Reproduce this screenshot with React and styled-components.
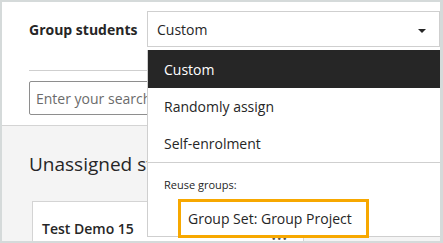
import styled, { createGlobalStyle } from "styled-components";

const Global = createGlobalStyle`
  html, body {
    margin: 0;
    padding: 0;
    background: #d5dada;
  }
  * {
    box-sizing: border-box;
  }
`;

const Frame = styled.div`
  position: relative;
  width: 443px;
  height: 243px;
  border: 2px solid #d5dada;
  border-right-width: 3px;
  overflow: hidden;
  font-family: "Open Sans", "Liberation Sans", sans-serif;
  color: #262626;
  background: #f4f4f4;
`;

const TopPanel = styled.div`
  height: 124px;
  background: #fff;
  border-bottom: 1px solid #d4d4d4;
  padding: 9px 0 0 26px;
`;

const FieldRow = styled.div`
  display: flex;
  align-items: center;
`;

const Label = styled.label`
  width: 119px;
  font-size: 14px;
  font-weight: 700;
  padding-left: 1px;
`;

const SelectWrap = styled.div`
  position: relative;
  z-index: 2;
`;

const SelectBox = styled.div`
  display: flex;
  align-items: center;
  justify-content: space-between;
  width: 293px;
  height: 36px;
  padding: 0 13px 0 9px;
  border: 1px solid #cfcfcf;
  background: #fff;
  font-size: 14px;
`;

const Caret = styled.span`
  width: 0;
  height: 0;
  margin-top: 3px;
  border-left: 4px solid transparent;
  border-right: 4px solid transparent;
  border-top: 4px solid #262626;
`;

const Menu = styled.ul`
  position: absolute;
  top: 39px;
  left: 0;
  width: 294px;
  height: 187px;
  margin: 0;
  padding: 0;
  list-style: none;
  background: #fff;
  border: 1px solid #cfcfcf;
  border-top: none;
`;

const Option = styled.li`
  display: flex;
  align-items: center;
  height: ${(p) => (p.$height ? p.$height : 37)}px;
  padding-left: 16px;
  font-size: 14px;
  background: ${(p) => (p.$selected ? "#262626" : "#fff")};
  color: ${(p) => (p.$selected ? "#fff" : "#262626")};
`;

const MenuDivider = styled.li`
  height: 1px;
  background: #cfcfcf;
`;

const GroupHeading = styled.li`
  padding: 14px 0 0 16px;
  font-size: 11px;
  color: #262626;
`;

const FocusedOption = styled.li`
  display: flex;
  align-items: center;
  width: 191px;
  height: 39px;
  margin: 7px 0 0 30px;
  padding-left: 7px;
  border: 3px solid #f7a800;
  font-size: 14px;
`;

const Rule = styled.hr`
  width: 300px;
  margin: 23px 0 0 1px;
  border: none;
  border-top: 1px solid #cfcfcf;
`;

const Search = styled.input`
  display: block;
  width: 300px;
  height: 34px;
  margin: 10px 0 0 1px;
  padding: 0 6px;
  border: 1px solid #8e8e8e;
  border-radius: 2px;
  font-family: "Open Sans", "Liberation Sans", sans-serif;
  font-size: 14px;
  color: #262626;
  &::placeholder {
    color: #6b6b6b;
  }
`;

const Lower = styled.div`
  padding: 24px 0 0 27px;
`;

const Heading = styled.h2`
  margin: 0;
  font-size: 19px;
  font-weight: 400;
  line-height: 28px;
`;

const Card = styled.div`
  position: relative;
  width: 272px;
  height: 60px;
  margin: 23px 0 0 3px;
  padding: 17px 0 0 9px;
  background: #fff;
  border: 1px solid #d4d4d4;
`;

const CardName = styled.div`
  font-size: 14px;
  font-weight: 600;
`;

const More = styled.span`
  position: absolute;
  top: 31px;
  right: 15px;
  font-size: 12px;
  line-height: 12px;
  letter-spacing: 1px;
  color: #555;
`;

export default function App() {
  return (
    <>
      <Global />
      <Frame>
        <TopPanel>
          <FieldRow>
            <Label>Group students</Label>
            <SelectWrap>
              <SelectBox>
                <span>Custom</span>
                <Caret />
              </SelectBox>
              <Menu>
                <Option $selected $height={38}>Custom</Option>
                <Option>Randomly assign</Option>
                <Option>Self-enrolment</Option>
                <MenuDivider />
                <GroupHeading>Reuse groups:</GroupHeading>
                <FocusedOption>Group Set: Group Project</FocusedOption>
              </Menu>
            </SelectWrap>
          </FieldRow>
          <Rule />
          <Search placeholder="Enter your search" />
        </TopPanel>
        <Lower>
          <Heading>Unassigned students</Heading>
          <Card>
            <CardName>Test Demo 15</CardName>
            <More>•••</More>
          </Card>
        </Lower>
      </Frame>
    </>
  );
}
